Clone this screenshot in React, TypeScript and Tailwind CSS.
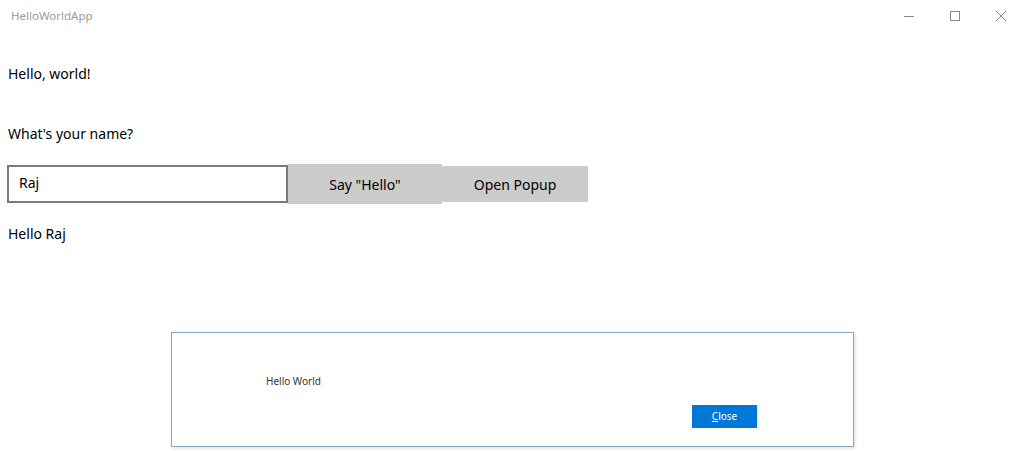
const font = { fontFamily: '"Noto Sans", "Open Sans", sans-serif' };

const TitleBar = () => (
  <div className="flex h-8 items-center justify-between">
    <span className="pl-[11px] text-[11.5px] text-[#9b9b9b]">HelloWorldApp</span>
    <div className="flex h-8">
      <div className="flex w-[46px] items-center justify-center">
        <svg width="10" height="10" viewBox="0 0 10 10">
          <path d="M0 5.5h10" stroke="#8a8a8a" strokeWidth="1" />
        </svg>
      </div>
      <div className="flex w-[46px] items-center justify-center">
        <svg width="10" height="10" viewBox="0 0 10 10">
          <rect x="0.5" y="0.5" width="9" height="9" fill="none" stroke="#8a8a8a" strokeWidth="1" />
        </svg>
      </div>
      <div className="flex w-[46px] items-center justify-center">
        <svg width="10" height="10" viewBox="0 0 10 10">
          <path d="M0 0L10 10M10 0L0 10" stroke="#8a8a8a" strokeWidth="1" />
        </svg>
      </div>
    </div>
  </div>
);

export default function App() {
  return (
    <div className="relative h-[451px] w-[1024px] overflow-hidden bg-white text-black" style={font}>
      <TitleBar />

      <div className="pl-2 text-[14px]">
        <p className="mt-[31px] leading-[22px]">Hello, world!</p>
        <p className="mt-[38px] leading-[22px]">What's your name?</p>

        <div className="mt-[19px] flex items-center">
          <div className="-ml-px flex h-[38px] w-[281px] items-center border-2 border-[#7a7a7a] pb-[4px] pl-[10px]">
            Raj
          </div>
          <button className="flex h-[40px] w-[154px] items-center justify-center bg-[#cccccc]">
            Say "Hello"
          </button>
          <button className="flex h-[36px] w-[146px] items-center justify-center bg-[#cccccc]">
            Open Popup
          </button>
        </div>

        <p className="mt-[19px] leading-[22px]">Hello Raj</p>
      </div>

      <div className="absolute left-[171px] top-[332px] h-[115px] w-[683px] border border-[#8aa6c4] bg-white shadow-[1px_1px_3px_rgba(0,0,0,0.15)]">
        <div className="flex h-full flex-col">
          <p className="ml-[94px] mt-[41px] text-[10px] leading-[14px] text-[#333333]">Hello World</p>
          <div className="mt-[17px] flex justify-end pr-[96px]">
            <button className="flex h-[23px] w-[65px] items-center justify-center bg-[#0078d7] text-[10px] text-white">
              <span><span className="underline">C</span>lose</span>
            </button>
          </div>
        </div>
      </div>
    </div>
  );
}
